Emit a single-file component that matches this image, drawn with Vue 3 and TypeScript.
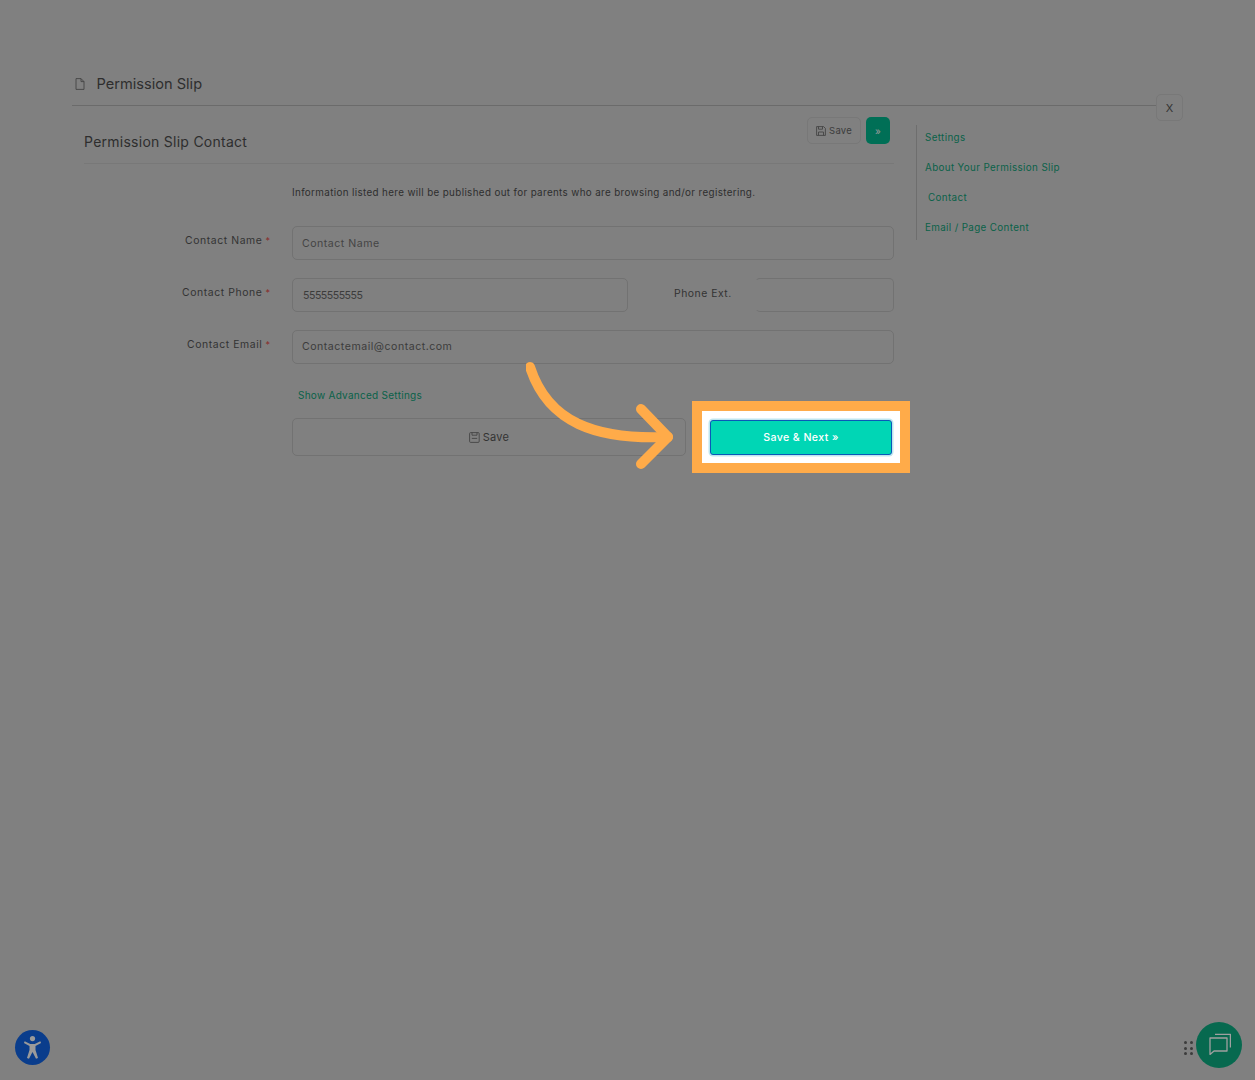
<script setup lang="ts">
interface NavItem { label: string; indented?: boolean }
const nav: NavItem[] = [
  { label: 'Settings' },
  { label: 'About Your Permission Slip' },
  { label: 'Contact', indented: true },
  { label: 'Email / Page Content' },
]
</script>

<template>
  <div class="page">
    <header class="head">
      <svg class="doc" width="10" height="12" viewBox="0 0 10 12" fill="none" stroke="#444" stroke-width="0.9">
        <path d="M1 .6h5l3 3v7.8H1z" />
        <path d="M6 .6v3h3" />
      </svg>
      <span class="head-title">Permission Slip</span>
    </header>
    <button class="close">X</button>

    <div class="body">
      <main class="form-col">
        <div class="form-head">
          <h2>Permission Slip Contact</h2>
          <div class="head-actions">
            <button class="mini-save">
              <svg width="10" height="10" viewBox="0 0 10 10" fill="none" stroke="#444" stroke-width="0.9">
                <path d="M.6.6h7l1.8 1.8v7H.6z" /><path d="M2.5.6v2.6h4V.6M2.5 9.4V6h5v3.4" />
              </svg>
              Save
            </button>
            <button class="mini-next">»</button>
          </div>
        </div>

        <p class="intro">Information listed here will be published out for parents who are browsing and/or registering.</p>

        <div class="row">
          <label>Contact Name<i>*</i></label>
          <div class="field grow placeholder">Contact Name</div>
        </div>
        <div class="row">
          <label>Contact Phone<i>*</i></label>
          <div class="field phone">5555555555</div>
          <span class="ext-label">Phone Ext.</span>
          <div class="field ext"></div>
        </div>
        <div class="row">
          <label>Contact Email<i>*</i></label>
          <div class="field grow">Contactemail@contact.com</div>
        </div>

        <a class="advanced">Show Advanced Settings</a>

        <div class="save-row">
          <button class="save-wide">
            <svg width="11" height="11" viewBox="0 0 11 11" fill="none" stroke="#444" stroke-width="0.9">
              <rect x=".6" y=".6" width="9.6" height="9.8" rx="1" /><path d="M3 .6v2.6h5V.6M2.8 6.4h5.4" />
            </svg>
            Save
          </button>
        </div>
      </main>

      <nav class="side">
        <a v-for="item in nav" :key="item.label" :class="{ indented: item.indented }">{{ item.label }}</a>
      </nav>
    </div>

    <svg class="arrow" width="160" height="118" viewBox="0 0 160 118" fill="none" stroke="#ffab49" stroke-width="10" stroke-linecap="round" stroke-linejoin="round">
      <path d="M4 9C22 65 70 82 142 79" />
      <path d="M115 51L142 79L115 106" />
    </svg>

    <div class="highlight">
      <div class="highlight-inner">
        <button class="next">Save &amp; Next »</button>
      </div>
    </div>

    <div class="a11y">
      <svg width="35" height="35" viewBox="0 0 35 35" fill="#9a9a9a">
        <circle cx="17.5" cy="8.6" r="2.6" />
        <path d="M9.7 11.3L15.2 14h4.6l5.5-2.7.8 1.8-5.6 2.9v4l2.5 8-2 .8-3.5-6.8-3.5 6.8-2-.8 2.5-8v-4L8.9 13.1z" />
      </svg>
    </div>

    <div class="grip"><b v-for="n in 6" :key="n"></b></div>
    <div class="chat">
      <svg width="24" height="24" viewBox="0 0 24 24" fill="none" stroke="#a0a0a0" stroke-width="1.3" stroke-linejoin="round">
        <path d="M3 5h17v13H7l-4 3.4z" />
        <path d="M8 1.4h15.4v13" />
      </svg>
    </div>
  </div>
</template>

<style>
html, body { margin: 0; background: #808080; }
</style>

<style scoped>
.page {
  position: relative;
  width: 1255px;
  height: 1080px;
  overflow: hidden;
  background: #808080;
  color: #333;
  font-family: Inter, "Noto Sans", "Liberation Sans", sans-serif;
  box-sizing: border-box;
  padding: 64px 98px 0 72px;
}
button { font-family: inherit; }

.head {
  display: flex;
  align-items: center;
  height: 39px;
  border-bottom: 1px solid #6b6b6b;
  padding-left: 3px;
  padding-bottom: 2px;
  box-sizing: content-box;
}
.doc { margin-right: 11.5px; }
.head-title { font-size: 14.6px; color: #2e2e2e; }

.close {
  position: absolute;
  left: 1156px;
  top: 94px;
  width: 27px;
  height: 27px;
  padding: 0;
  border: 1px solid #787878;
  border-radius: 5px;
  background: #808080;
  color: #333;
  font-size: 11px;
}

.body { display: flex; }
.form-col { width: 810px; margin-left: 12px; flex: none; }

.form-head {
  display: flex;
  justify-content: space-between;
  height: 58px;
  box-sizing: border-box;
  border-bottom: 1px solid #787878;
  padding-top: 11px;
}
.form-head h2 {
  margin: 16px 0 0;
  font-size: 14px;
  line-height: 18px;
  font-weight: 400;
  letter-spacing: .26px;
  color: #2e2e2e;
}
.head-actions { display: flex; gap: 5px; padding-right: 4px; height: 27px; }
.mini-save {
  width: 54px;
  padding: 0;
  display: flex;
  align-items: center;
  justify-content: center;
  gap: 3px;
  background: transparent;
  border: 1px solid #787878;
  border-radius: 5px;
  color: #3c3c3c;
  font-size: 9.5px;
  letter-spacing: .2px;
}
.mini-next {
  width: 24px;
  padding: 0;
  background: #006f56;
  border: none;
  border-radius: 5px;
  color: #9a9a9a;
  font-size: 10px;
}

.intro {
  margin: 22px 0 26px 208px;
  font-size: 9.8px;
  line-height: 14px;
  letter-spacing: .37px;
  color: #2e2e2e;
}

.row { display: flex; align-items: flex-start; margin-bottom: 18px; height: 34px; }
.row label {
  width: 186px;
  flex: none;
  margin-right: 22px;
  text-align: right;
  font-size: 10.4px;
  line-height: 30px;
  letter-spacing: .6px;
  color: #333;
  white-space: nowrap;
}
.row label i { color: #8a2a2a; font-style: normal; margin-left: 3px; font-size: 9px; letter-spacing: 0; }
.field {
  box-sizing: border-box;
  height: 34px;
  border: 1px solid #727272;
  border-radius: 5px;
  padding-left: 9px;
  font-size: 10.6px;
  line-height: 32px;
  letter-spacing: .5px;
  color: #3c3c3c;
}
.grow { flex: 1; }
.placeholder { color: #444; line-height: 33px; }
.phone { width: 336px; flex: none; letter-spacing: -.5px; padding-left: 10px; line-height: 33px; }
.ext-label { width: 127px; flex: none; box-sizing: border-box; padding-left: 46px; font-size: 10.4px; line-height: 32px; letter-spacing: .5px; color: #333; }
.ext { width: 139px; flex: none; border-left-color: transparent; }

.advanced {
  display: block;
  margin: 24px 0 0 214px;
  font-size: 10px;
  line-height: 14px;
  letter-spacing: .27px;
  color: #0a6249;
}

.save-row { margin: 16px 0 0 208px; }
.save-wide {
  width: 394px;
  height: 38px;
  display: flex;
  align-items: center;
  justify-content: center;
  gap: 3px;
  background: transparent;
  border: 1px solid #727272;
  border-radius: 5px;
  color: #333;
  font-size: 11px;
  letter-spacing: .2px;
}

.side {
  margin: 19px 0 0 22px;
  height: 115px;
  box-sizing: border-box;
  border-left: 1px solid #6e6e6e;
  padding-left: 8px;
  display: flex;
  flex-direction: column;
}
.side a { flex: none; font-size: 9.8px; line-height: 26px; height: 30px; letter-spacing: .37px; color: #0a6249; white-space: nowrap; }
.side a.indented { padding-left: 3px; }

.arrow { position: absolute; left: 526px; top: 358px; }

.highlight {
  position: absolute;
  left: 692px;
  top: 401px;
  width: 218px;
  height: 72px;
  box-sizing: border-box;
  border: 10px solid #ffab49;
}
.highlight-inner {
  height: 100%;
  background: #fff;
  display: flex;
  align-items: center;
  justify-content: center;
}
.next {
  width: 182px;
  height: 35px;
  padding: 0;
  background: #00d6b5;
  border: 1px solid #0a58b8;
  border-radius: 3px;
  box-shadow: 0 0 0 1.5px #bfe6ef;
  color: #fff;
  font-size: 10.6px;
  font-weight: 500;
  letter-spacing: .4px;
}

.a11y {
  position: absolute;
  left: 15px;
  top: 1030px;
  width: 35px;
  height: 35px;
  border-radius: 50%;
  background: #0a3d8c;
  display: flex;
  align-items: center;
  justify-content: center;
}
.grip {
  position: absolute;
  left: 1184px;
  top: 1041px;
  width: 10px;
  display: grid;
  grid-template-columns: 3px 3px;
  column-gap: 3px;
  row-gap: 2.5px;
}
.grip b { width: 3px; height: 3px; border-radius: 50%; background: #3c3c3c; }
.chat {
  position: absolute;
  left: 1196px;
  top: 1022px;
  width: 46px;
  height: 46px;
  border-radius: 50%;
  background: #07694f;
  display: flex;
  align-items: center;
  justify-content: center;
}
</style>
